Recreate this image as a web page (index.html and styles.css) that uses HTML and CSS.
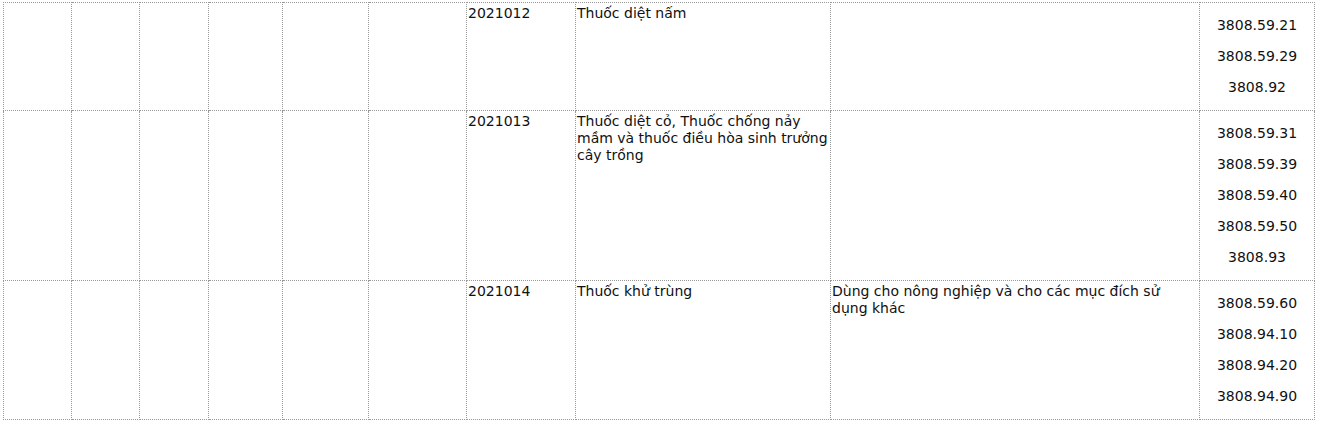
FILE: index.html
```html
<!DOCTYPE html>
<html lang="vi">
<head>
<meta charset="utf-8">
<title>Bảng mã</title>
<link rel="stylesheet" href="styles.css">
</head>
<body>
<div class="wrap">
<table class="grid">
  <colgroup>
    <col class="c1"><col class="c2"><col class="c3"><col class="c4"><col class="c5"><col class="c6">
    <col class="c7"><col class="c8"><col class="c9"><col class="c10">
  </colgroup>
  <tbody>
    <tr>
      <td></td><td></td><td></td><td></td><td></td><td></td>
      <td class="txt">2021012</td>
      <td class="txt">Thuốc diệt nấm</td>
      <td class="txt"></td>
      <td class="codes"><p>3808.59.21</p><p>3808.59.29</p><p>3808.92</p></td>
    </tr>
    <tr>
      <td></td><td></td><td></td><td></td><td></td><td></td>
      <td class="txt">2021013</td>
      <td class="txt">Thuốc diệt cỏ, Thuốc chống nảy mầm và thuốc điều hòa sinh trưởng cây trồng</td>
      <td class="txt"></td>
      <td class="codes"><p>3808.59.31</p><p>3808.59.39</p><p>3808.59.40</p><p>3808.59.50</p><p>3808.93</p></td>
    </tr>
    <tr>
      <td></td><td></td><td></td><td></td><td></td><td></td>
      <td class="txt">2021014</td>
      <td class="txt">Thuốc khử trùng</td>
      <td class="txt">Dùng cho nông nghiệp và cho các mục đích sử dụng khác</td>
      <td class="codes"><p>3808.59.60</p><p>3808.94.10</p><p>3808.94.20</p><p>3808.94.90</p></td>
    </tr>
  </tbody>
</table>
</div>
</body>
</html>
```

FILE: styles.css
```css
html, body {
  margin: 0;
  padding: 0;
  background: #fff;
}
.wrap {
  padding: 2px 0 0 3px;
}
.grid {
  border-collapse: collapse;
  table-layout: fixed;
  width: 1312px;
  font-family: "DejaVu Sans", Verdana, sans-serif;
  font-size: 14px;
  line-height: 17px;
  color: #111;
}
.grid td {
  border: 1px dotted #999;
  padding: 0 1px;
  vertical-align: top;
  text-align: left;
}
.grid .txt {
  padding-top: 2px;
}
.grid .codes {
  text-align: center;
}
.codes p {
  margin: 14px 0;
}
.c1 { width: 68px; }
.c2 { width: 68px; }
.c3 { width: 69px; }
.c4 { width: 74px; }
.c5 { width: 86px; }
.c6 { width: 98px; }
.c7 { width: 109px; }
.c8 { width: 255px; }
.c9 { width: 369px; }
.c10 { width: 115px; }
```
